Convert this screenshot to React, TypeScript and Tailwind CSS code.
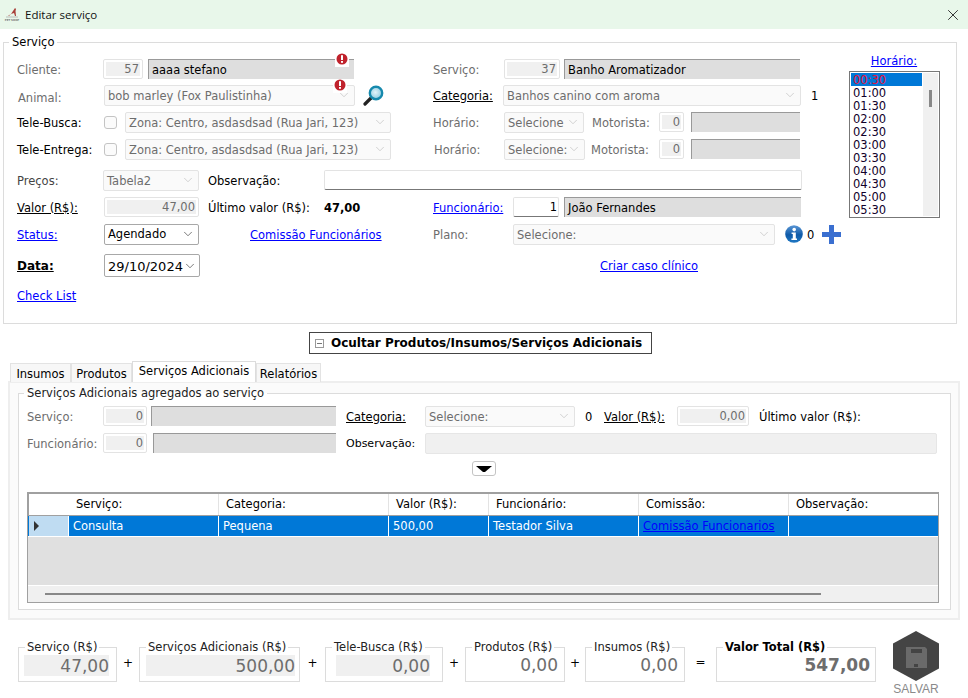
import React from 'react';
import {ChevronDown, X} from 'lucide-react';

type BoxProps = {className?: string; children?: React.ReactNode}

const Row: React.FC<BoxProps> = ({className = '', children}) => (
    <div className={`flex items-center h-[20px] [&>span]:pt-[3px] ${className}`}>{children}</div>
);

const Label: React.FC<BoxProps> = ({className = '', children}) => (
    <span className={`shrink-0 whitespace-nowrap ${className}`}>{children}</span>
);

const Muted: React.FC<BoxProps> = ({className = '', children}) => (
    <Label className={`text-[#6d6d6d] ${className}`}>{children}</Label>
);

const Link: React.FC<BoxProps> = ({className = '', children}) => (
    <Label className={`text-[#0000ff] underline ${className}`}>{children}</Label>
);

const Under: React.FC<BoxProps> = ({className = '', children}) => (
    <Label className={`text-black underline ${className}`}>{children}</Label>
);

const IdField: React.FC<BoxProps> = ({className = '', children}) => (
    <div className={`shrink-0 h-[20px] border border-[#e3e3e3] rounded-[2px] p-[2px] ${className}`}>
        <div className="h-full bg-[#f0f0f0] text-[#6d6d6d] text-right leading-[14px] pr-[1px]">{children}</div>
    </div>
);

const NameField: React.FC<BoxProps> = ({className = '', children}) => (
    <div className={`shrink-0 h-[20px] bg-[#dedede] border-t border-l border-[#999999] text-black pl-[3px] leading-[20px] ${className}`}>{children}</div>
);

const SelectBox: React.FC<BoxProps> = ({className = '', children}) => (
    <div className={`shrink-0 h-[21px] flex items-center justify-between pl-[3px] pr-[3px] bg-[#fafafa] border border-[#e3e3e3] rounded-[2px] text-[#6d6d6d] ${className}`}>
        <span className="whitespace-nowrap pt-[3px]">{children}</span>
        <ChevronDown className="w-[14px] h-[14px] text-[#b4b4b4] shrink-0" strokeWidth={1}/>
    </div>
);

const ActiveSelect: React.FC<BoxProps> = ({className = '', children}) => (
    <div className={`shrink-0 flex items-center justify-between pl-[3px] pr-[3px] bg-white border border-[#a8a8a8] rounded-[2px] text-black ${className}`}>
        <span className="whitespace-nowrap pt-[2px]">{children}</span>
        <ChevronDown className="w-[14px] h-[14px] text-[#444444] shrink-0" strokeWidth={1.2}/>
    </div>
);

const Check: React.FC = () => (
    <div className="shrink-0 w-[13px] h-[13px] border border-[#c4c4c4] rounded-[3px] bg-[#fbfbfb]"/>
);

const Alert: React.FC<{className: string}> = ({className}) => (
    <div className={`absolute w-[14px] h-[13px] bg-white flex items-start justify-center ${className}`}>
        <svg width="12" height="12" viewBox="0 0 12 12" className="-mt-[1px]">
            <circle cx="6" cy="6" r="5.5" fill="#c0222c"/>
            <rect x="5" y="2.2" width="2" height="4.8" fill="#fff"/>
            <rect x="5" y="8" width="2" height="1.8" fill="#fff"/>
        </svg>
    </div>
);

const Magnifier: React.FC = () => (
    <svg width="21" height="21" viewBox="0 0 21 21" className="shrink-0">
        <defs>
            <radialGradient id="lens" cx="45%" cy="45%" r="55%">
                <stop offset="0%" stopColor="#e4f4fa"/>
                <stop offset="100%" stopColor="#8fcbe0"/>
            </radialGradient>
        </defs>
        <line x1="2" y1="19" x2="8" y2="13" stroke="#222222" strokeWidth="3.2" strokeLinecap="round"/>
        <circle cx="13" cy="8" r="6.2" fill="url(#lens)" stroke="#1689ad" strokeWidth="2.4"/>
    </svg>
);

const InfoIcon: React.FC = () => (
    <svg width="18" height="18" viewBox="0 0 18 18" className="shrink-0">
        <defs>
            <linearGradient id="infoFill" x1="0" y1="0" x2="0" y2="1">
                <stop offset="0%" stopColor="#5b97d6"/>
                <stop offset="55%" stopColor="#0f5aa8"/>
                <stop offset="100%" stopColor="#1f78c4"/>
            </linearGradient>
        </defs>
        <circle cx="9" cy="9" r="8.8" fill="url(#infoFill)"/>
        <circle cx="9.2" cy="4.6" r="1.8" fill="#fff"/>
        <path d="M6.6 7.4h4.2v6.2h1.2v1.5H6.4v-1.5h1.4V8.9H6.6z" fill="#fff"/>
    </svg>
);

const PlusIcon: React.FC = () => (
    <svg width="19" height="19" viewBox="0 0 19 19" className="shrink-0">
        <path d="M7 0h5v7h7v5h-7v7H7v-7H0V7h7z" fill="#3a6fd0"/>
    </svg>
);

const Logo: React.FC = () => (
    <svg width="16" height="15" viewBox="0 0 16 15" className="shrink-0">
        <path d="M4 9l3-2 2-3 2-3 1 1-.5 2 .5 5h-1l-1-3-3 1-2 2z" fill="#a8403a"/>
        <path d="M2 10h12" stroke="#b0b0b0" strokeWidth=".8"/>
        <text x="8" y="14" textAnchor="middle" fontSize="2.6" fontWeight="bold" fill="#777777">PET SHOP</text>
    </svg>
);

const SaveHexagon: React.FC = () => (
    <svg width="46" height="50" viewBox="0 0 46 50" className="shrink-0">
        <polygon points="23,0 46,12.5 46,37.5 23,50 0,37.5 0,12.5" fill="#444444"/>
        <path d="M13 16h19l2 2v19H13z" fill="#6a6a6a"/>
        <rect x="18" y="18" width="11" height="4" fill="#444444"/>
        <rect x="21" y="33" width="4" height="3" fill="#444444"/>
    </svg>
);

const HOURS = ['00:30', '01:00', '01:30', '02:00', '02:30', '03:00', '03:30', '04:00', '04:30', '05:00', '05:30'];

const HourList: React.FC = () => (
    <div className="flex flex-col items-center w-[91px] shrink-0 mt-[5px]">
        <Link className="leading-[14px] -ml-[1px]">Horário:</Link>
        <div className="mt-[3px] w-[91px] h-[147px] border border-[#777777] flex">
            <div className="pl-[1px] pt-[1px] w-[72px] overflow-hidden">
                {HOURS.map((h, i) => (
                    <div key={h}
                         className={i === 0 ? 'h-[13px] leading-[14px] pl-[2px] bg-[#0078d7] text-[#e8103c]' : 'h-[13px] leading-[14px] pl-[2px] text-[#10002a]'}>{h}</div>
                ))}
            </div>
            <div className="flex-1 bg-[#f0f0f0] m-[1px] flex justify-center">
                <div className="w-[3px] h-[17px] mt-[17px] bg-[#888888]"/>
            </div>
        </div>
    </div>
);

const ServiceForm: React.FC = () => (
    <fieldset className="border border-[#dcdcdc] h-[289px] mt-[6px] mx-[3px] w-[954px] min-w-0">
        <legend className="ml-[5px] px-[3px] -mr-[3px] leading-[14px] text-black">Serviço</legend>
        <div className="flex">
            <div className="w-[845px] shrink-0 pl-[13px] pt-[10px] relative">
                <Row>
                    <Muted className="w-[86px]">Cliente:</Muted>
                    <IdField className="w-[40px]">57</IdField>
                    <NameField className="w-[206px] ml-[5px]">aaaa stefano</NameField>
                    <Muted className="w-[71px] ml-[79px]">Serviço:</Muted>
                    <IdField className="w-[56px]">37</IdField>
                    <NameField className="w-[236px] ml-[4px]">Banho Aromatizador</NameField>
                </Row>
                <Row className="mt-[6px]">
                    <Muted className="w-[87px]"><span className="block pl-[1px] pt-[4px]">Animal:</span></Muted>
                    <SelectBox className="w-[251px]">bob marley (Fox Paulistinha)</SelectBox>
                    <div className="ml-[8px] w-[70px]"><Magnifier/></div>
                    <Under className="w-[70px]">Categoria:</Under>
                    <SelectBox className="w-[298px]">Banhos canino com aroma</SelectBox>
                    <Label className="ml-[10px]">1</Label>
                </Row>
                <Row className="mt-[7px]">
                    <Label className="w-[87px]">Tele-Busca:</Label>
                    <Check/>
                    <SelectBox className="w-[266px] ml-[8px]">Zona: Centro, asdasdsad (Rua Jari, 123)</SelectBox>
                    <Muted className="w-[71px] ml-[42px]">Horário:</Muted>
                    <SelectBox className="w-[80px]">Selecione</SelectBox>
                    <Muted className="w-[67px] ml-[8px]">Motorista:</Muted>
                    <IdField className="w-[25px]">0</IdField>
                    <NameField className="w-[109px] ml-[7px]"/>
                </Row>
                <Row className="mt-[7px]">
                    <Label className="w-[87px]">Tele-Entrega:</Label>
                    <Check/>
                    <SelectBox className="w-[266px] ml-[8px]">Zona: Centro, asdasdsad (Rua Jari, 123)</SelectBox>
                    <Muted className="w-[70px] ml-[43px]">Horário:</Muted>
                    <SelectBox className="w-[81px]">Selecione:</SelectBox>
                    <Muted className="w-[68px] ml-[6px]">Motorista:</Muted>
                    <IdField className="w-[25px]">0</IdField>
                    <NameField className="w-[109px] ml-[7px]"/>
                </Row>
                <Row className="mt-[11px]">
                    <Muted className="w-[86px] text-[#444444]">Preços:</Muted>
                    <SelectBox className="w-[96px]">Tabela2</SelectBox>
                    <Label className="w-[116px] ml-[9px]">Observação:</Label>
                    <div className="w-[478px] h-[20px] bg-white border border-[#e3e3e3] border-b-[#777777] rounded-[2px]"/>
                </Row>
                <Row className="mt-[7px]">
                    <Under className="w-[87px]">Valor (R$):</Under>
                    <IdField className="w-[95px]">47,00</IdField>
                    <Label className="w-[116px] ml-[9px]">Último valor (R$):</Label>
                    <Label className="w-[109px] font-bold">47,00</Label>
                    <Link className="w-[80px]">Funcionário:</Link>
                    <div className="shrink-0 w-[46px] h-[20px] bg-white border border-[#e3e3e3] border-b-[#777777] rounded-[2px] text-right pr-[1px] leading-[18px]">1</div>
                    <NameField className="w-[237px] ml-[5px]">João Fernandes</NameField>
                </Row>
                <Row className="mt-[7px]">
                    <Link className="w-[87px]">Status:</Link>
                    <ActiveSelect className="w-[95px] h-[21px]">Agendado</ActiveSelect>
                    <Link className="w-[183px] ml-[51px]">Comissão Funcionários</Link>
                    <Muted className="w-[80px]">Plano:</Muted>
                    <SelectBox className="w-[262px]">Selecione:</SelectBox>
                    <div className="ml-[10px]"><InfoIcon/></div>
                    <Label className="ml-[4px] w-[15px]">0</Label>
                    <PlusIcon/>
                </Row>
                <div className="flex items-center h-[23px] mt-[10px]">
                    <Under className="w-[87px] font-bold text-[12px]">Data:</Under>
                    <ActiveSelect className="w-[96px] h-[23px] text-[13px] pl-[1px] border-[#777777]">29/10/2024</ActiveSelect>
                    <Link className="ml-[400px] pt-[2px]">Criar caso clínico</Link>
                </div>
                <Row className="mt-[8px]">
                    <Link>Check List</Link>
                </Row>
                <Alert className="left-[331px] top-[5px]"/>
                <Alert className="left-[329px] top-[31px]"/>
            </div>
            <HourList/>
        </div>
    </fieldset>
);

const Tab: React.FC<BoxProps & {active?: boolean}> = ({className = '', active, children}) => (
    <div className={active
        ? `h-[21px] bg-white border border-b-0 border-[#dcdcdc] text-center leading-[19px] -mb-[1px] relative ${className}`
        : `h-[19px] mt-[2px] bg-[#f7f7f7] border border-b-0 border-[#e3e3e3] text-center leading-[20px] ${className}`}>{children}</div>
);

const COLUMNS = [
    {name: 'Serviço:', value: 'Consulta', cls: 'w-[150px]'},
    {name: 'Categoria:', value: 'Pequena', cls: 'w-[170px]'},
    {name: 'Valor (R$):', value: '500,00', cls: 'w-[100px]'},
    {name: 'Funcionário:', value: 'Testador Silva', cls: 'w-[150px]'},
    {name: 'Comissão:', value: 'Comissão Funcionarios', cls: 'w-[150px]'},
    {name: 'Observação:', value: '', cls: 'w-[150px]'},
];

const ItemsTable: React.FC = () => (
    <div className="mt-[16px] ml-[8px] w-[912px] h-[111px] border border-[#a0a0a0] flex flex-col bg-[#e0e0e0]">
        <div className="h-[23px] flex bg-white border-t border-l border-[#a0a0a0] border-b shrink-0">
            <div className="w-[40px] shrink-0"/>
            {COLUMNS.map(c => (
                <div key={c.name} className={`${c.cls} pl-[7px] shrink-0 border-r border-[#e3e3e3] leading-[21px] last:border-r-0`}>{c.name}</div>
            ))}
        </div>
        <div className="h-[21px] flex shrink-0 bg-[#0078d7] text-white border-b border-white">
            <div className="w-[40px] ml-[1px] shrink-0 bg-[#bfdcf2] flex items-center pl-[5px] border-r border-white">
                <div className="w-0 h-0 border-y-[5px] border-y-transparent border-l-[5px] border-l-[#333333]"/>
            </div>
            {COLUMNS.map(c => (
                <div key={c.name}
                     className={`${c.cls} shrink-0 pl-[4px] border-r border-white leading-[21px] last:border-r-0 whitespace-nowrap ${c.name === 'Comissão:' ? 'text-[#0000ff] underline' : ''}`}>{c.value}</div>
            ))}
        </div>
        <div className="flex-1"/>
        <div className="h-[17px] shrink-0 bg-[#f0f0f0] border-t border-white pt-[7px] pl-[17px]">
            <div className="w-[776px] h-[2px] bg-[#888888]"/>
        </div>
    </div>
);

const ExtrasPanel: React.FC = () => (
    <div className="mt-[7px] ml-[8px]">
        <div className="flex pl-[2px] h-[20px] items-start">
            <Tab className="w-[61px]">Insumos</Tab>
            <Tab className="w-[61px]">Produtos</Tab>
            <Tab active className="w-[124px]">Serviços Adicionais</Tab>
            <Tab className="w-[65px]">Relatórios</Tab>
        </div>
        <div className="w-[952px] h-[239px] border-2 border-[#eeeeee] bg-[#fbfbfb] pl-[8px] pt-[3px]">
            <fieldset className="w-[933px] h-[224px] border border-[#dcdcdc] bg-white min-w-0">
                <legend className="ml-[5px] px-[3px] -mr-[3px] leading-[14px] text-[#222222]">Serviços Adicionais agregados ao serviço</legend>
                <div className="pl-[8px] pt-[6px]">
                    <Row>
                        <Muted className="w-[76px]">Serviço:</Muted>
                        <IdField className="w-[44px]">0</IdField>
                        <NameField className="w-[185px] ml-[4px]"/>
                        <Under className="w-[79px] ml-[10px]">Categoria:</Under>
                        <SelectBox className="w-[150px]">Selecione:</SelectBox>
                        <Label className="w-[19px] ml-[10px]">0</Label>
                        <Under className="w-[73px]">Valor (R$):</Under>
                        <IdField className="w-[72px]">0,00</IdField>
                        <Label className="ml-[10px]">Último valor (R$):</Label>
                    </Row>
                    <Row className="mt-[7px]">
                        <Muted className="w-[76px]">Funcionário:</Muted>
                        <IdField className="w-[44px]">0</IdField>
                        <NameField className="w-[183px] ml-[6px]"/>
                        <Label className="w-[79px] ml-[10px] text-[11px]">Observação:</Label>
                        <div className="w-[512px] h-[21px] bg-[#f0f0f0] border border-[#e6e6e6] rounded-[2px]"/>
                    </Row>
                    <div className="mt-[8px] ml-[445px] w-[24px] h-[15px] border border-[#c4c4c4] rounded-[3px] flex items-center justify-center">
                        <svg width="16" height="6" viewBox="0 0 16 6"><path d="M0 0h16L9 6H7z" fill="#000000"/></svg>
                    </div>
                </div>
                <ItemsTable/>
            </fieldset>
        </div>
    </div>
);

type TotalProps = {label: string; value: string; className: string; valueClass: string; bold?: boolean}

const Total: React.FC<TotalProps> = ({label, value, className, valueClass, bold}) => (
    <fieldset className={`h-[42px] border border-[#dcdcdc] shrink-0 min-w-0 ${className}`}>
        <legend className={`ml-[6px] px-[2px] leading-[14px] ${bold ? 'font-bold text-black' : 'text-[#222222]'}`}>{label}</legend>
        <div className={`h-[21px] mt-[1px] text-right text-[17px] text-[#6d6d6d] ${bold ? 'font-bold' : ''} ${valueClass}`}>{value}</div>
    </fieldset>
);

const Op: React.FC<BoxProps> = ({className = '', children}) => (
    <div className={`shrink-0 text-center text-[12px] ${className}`}>{children}</div>
);

const Totals: React.FC = () => (
    <div className="flex items-start pl-[18px] mt-[11px]">
        <div className="flex items-start mt-[9px]">
            <Total label="Serviço (R$)" value="47,00" className="w-[99px]" valueClass="leading-[22px] bg-[#f0f0f0] ml-[5px] mr-[7px]"/>
            <Op className="w-[22px] pt-[14px]">+</Op>
            <Total label="Serviços Adicionais (R$)" value="500,00" className="w-[161px]" valueClass="leading-[22px] bg-[#f0f0f0] ml-[6px] mr-[4px]"/>
            <Op className="w-[25px] pt-[14px]">+</Op>
            <Total label="Tele-Busca (R$)" value="0,00" className="w-[118px]" valueClass="leading-[22px] bg-[#f0f0f0] ml-[10px] mr-[12px]"/>
            <Op className="w-[22px] pt-[14px]">+</Op>
            <Total label="Produtos (R$)" value="0,00" className="w-[100px]" valueClass="leading-[20px] mr-[6px]"/>
            <Op className="w-[20px] pt-[14px]">+</Op>
            <Total label="Insumos (R$)" value="0,00" className="w-[100px]" valueClass="leading-[20px] mr-[6px]"/>
            <Op className="w-[31px] pt-[13px]">=</Op>
            <Total bold label="Valor Total (R$)" value="547,00" className="w-[160px]" valueClass="leading-[20px] mr-[5px]"/>
        </div>
        <div className="ml-[17px] flex flex-col items-center w-[46px]">
            <SaveHexagon/>
            <span className="font-['Liberation_Sans',sans-serif] text-[12px] text-[#8a8a8a] leading-[14px] mt-[1px]">SALVAR</span>
        </div>
    </div>
);

const App: React.FC = () => (
    <div className="w-[968px] h-[698px] overflow-hidden bg-white font-['DejaVu_Sans',sans-serif] text-[11.5px] text-black">
        <div className="h-[29px] bg-[#e8f7ea] flex items-center pl-[4px] pr-[6px]">
            <Logo/>
            <span className="ml-[5px] font-['Open_Sans',sans-serif] text-[11.5px] text-[#111111]">Editar serviço</span>
            <X className="ml-auto w-[18px] h-[18px] text-[#222222]" strokeWidth={1.2}/>
        </div>
        <ServiceForm/>
        <div className="mt-[8px] ml-[309px] w-[343px] h-[22px] border border-[#444444] flex items-center pl-[5px]">
            <div className="w-[9px] h-[9px] border border-[#999999] flex items-center justify-center shrink-0">
                <div className="w-[5px] h-[1px] bg-[#777777]"/>
            </div>
            <span className="ml-[7px] font-bold text-[12px] whitespace-nowrap">Ocultar Produtos/Insumos/Serviços Adicionais</span>
        </div>
        <ExtrasPanel/>
        <Totals/>
    </div>
);

export default App;
